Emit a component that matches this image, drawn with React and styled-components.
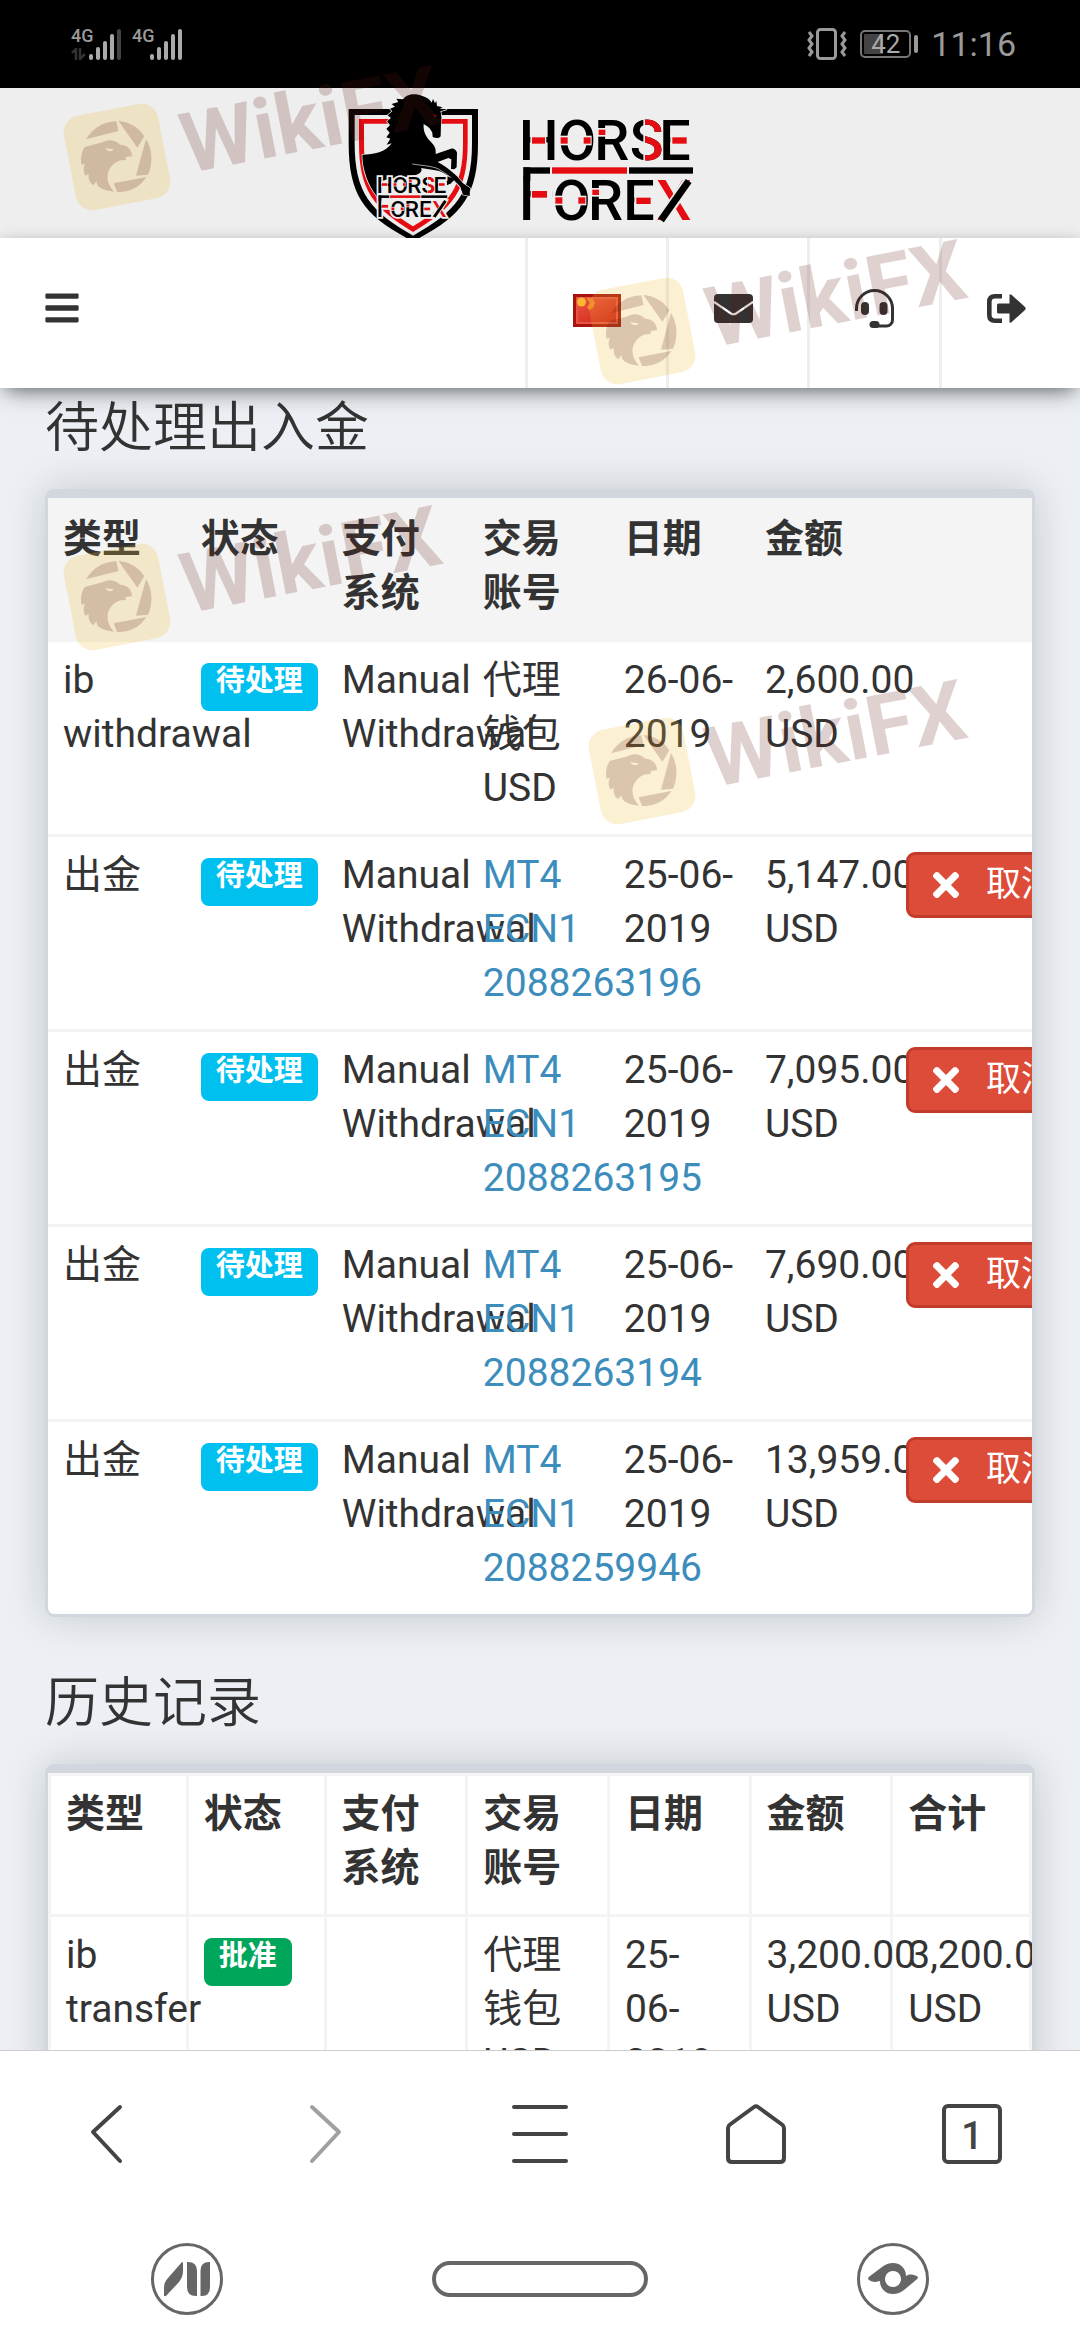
import React from "react";
import styled, { createGlobalStyle } from "styled-components";
import { FaBars, FaTimes } from "react-icons/fa";

const GlobalStyle = createGlobalStyle`
  *, *::before, *::after { box-sizing: border-box; }
  html, body { margin: 0; padding: 0; }
  body {
    background: #ecf0f5;
    color: #333;
    font-family: Roboto, "Noto Sans CJK SC", sans-serif;
    font-size: 39px;
    line-height: 54px;
  }
  button { font-family: inherit; }
`;

const Screen = styled.div`
  position: relative;
  display: flex;
  flex-direction: column;
  height: 100vh;
  overflow: hidden;
`;

/* ---------- phone status bar ---------- */

const StatusBar = styled.header`
  display: flex;
  flex: none;
  align-items: center;
  justify-content: space-between;
  height: 88px;
  padding: 0 64px 0 71px;
  background: #000;
  color: #9a9a9a;
`;

const StatusGroup = styled.div`
  display: flex;
  align-items: center;
  gap: ${(p) => p.$gap}px;
`;

const Signal = styled.div`
  display: flex;
  align-items: flex-end;
  height: 32px;
`;

const SignalSide = styled.div`
  display: flex;
  flex-direction: column;
  align-self: stretch;
  justify-content: space-between;
  width: 18px;
  font-size: 18px;
  font-weight: 500;
  line-height: 16px;
`;

const Battery = styled.div`
  display: flex;
  align-items: center;
  gap: 3px;
`;

const BatteryCase = styled.div`
  width: 51px;
  height: 28px;
  border: 2px solid #777;
  border-radius: 5px;
  background: linear-gradient(90deg, #444 45%, #000 45%) content-box;
  padding: 2px;
  color: #aaa;
  font-size: 26px;
  line-height: 20px;
  text-align: center;
`;

const BatteryNub = styled.div`
  width: 4px;
  height: 18px;
  border-radius: 2px;
  background: #9a9a9a;
`;

const Clock = styled.time`
  font-size: 34px;
  line-height: 40px;
`;

/* ---------- site header ---------- */

const Brand = styled.div`
  display: flex;
  flex: none;
  justify-content: center;
  height: 150px;
  padding-right: 36px;
  background: #eee;
`;

const NavBar = styled.nav`
  position: relative;
  z-index: 1;
  display: flex;
  flex: none;
  height: 150px;
  background: #fff;
  box-shadow: 0 10px 20px -6px rgba(0, 0, 0, 0.5), 0 0 12px rgba(0, 0, 0, 0.12);
`;

const MenuButton = styled.button`
  display: flex;
  align-items: center;
  margin-right: auto;
  padding: 0 43px 10px;
  border: 0;
  background: none;
  color: #333;
`;

const NavLink = styled.a`
  display: flex;
  align-items: center;
  padding: 0 ${(p) => (p.$wide ? 54 : 45)}px 10px 45px;
  border-left: 3px solid #eee;
  color: #333;
`;

/* ---------- content ---------- */

const Content = styled.main`
  flex: 1;
  min-height: 0;
  overflow: hidden auto;
  scrollbar-width: none;
  padding: 11px 45px 57px;
`;

const Section = styled.section`
  & + & { margin-top: 57px; }
`;

const Title = styled.h1`
  margin: 0 0 30px;
  font-size: 54px;
  font-weight: 350;
  line-height: 60px;
`;

const Card = styled.div`
  overflow: hidden;
  border: 3px solid #d2d6de;
  border-top-width: 9px;
  border-radius: 9px;
  background: #fff;
  box-shadow: 0 0 40px rgba(0, 0, 0, 0.17);
`;

const Table = styled.table`
  width: 100%;
  table-layout: fixed;
  border-spacing: 0;
  color: #333;

  th, td {
    padding: 11px 15px 19px;
    border: 0 solid #f4f4f4;
    border-top-width: 3px;
    border-left-width: ${(p) => (p.$bordered ? 3 : 0)}px;
    text-align: left;
    vertical-align: top;
    white-space: nowrap;
  }
  th:last-child, td:last-child {
    border-right-width: ${(p) => (p.$bordered ? 3 : 0)}px;
  }
  thead { background: ${(p) => (p.$bordered ? "#fff" : "#f4f4f4")}; }
`;

const NarrowCol = styled.col`
  width: 14%;
`;

const Badge = styled.span`
  display: block;
  width: fit-content;
  margin-top: 10px;
  padding: 4px 15px 15px;
  border-radius: 8px;
  background: ${(p) => (p.$tone === "approved" ? "#00a65a" : "#00c0ef")};
  color: #fff;
  font-size: 29px;
  font-weight: 700;
  line-height: 29px;
`;

const AccountLink = styled.a`
  color: #3c8dbc;
  text-decoration: none;
`;

const CancelButton = styled.button`
  position: relative;
  display: flex;
  align-items: center;
  gap: 21px;
  width: max-content;
  height: 66px;
  margin-top: 4px;
  padding: 0 18px;
  border: 3px solid #c23c2c;
  border-radius: 9px;
  background: #dd4b39;
  color: #fff;
  font-size: 35px;
  line-height: 54px;
`;

/* ---------- bottom bars ---------- */

const BrowserBar = styled.nav`
  display: grid;
  flex: none;
  grid-template-columns: repeat(5, 1fr);
  height: 167px;
  border-top: 1px solid #ccc;
  background: #fff;
`;

const BarButton = styled.button`
  display: grid;
  place-items: center;
  padding: 0;
  border: 0;
  background: none;
  color: ${(p) => (p.disabled ? "#a0a0a0" : "#444")};
`;

const TabCount = styled.span`
  display: grid;
  place-items: center;
  width: 60px;
  height: 60px;
  padding-top: 3px;
  border: 4px solid #444;
  border-radius: 6px;
  font-size: 38px;
  font-weight: 500;
  line-height: 48px;
`;

const SystemBar = styled.nav`
  display: flex;
  flex: none;
  align-items: center;
  justify-content: space-between;
  height: 123px;
  padding: 0 14%;
  background: #fff;
`;

const RoundButton = styled.button`
  display: grid;
  place-items: center;
  width: 72px;
  height: 72px;
  padding: 0;
  border: 3px solid #666;
  border-radius: 50%;
  background: none;
  color: #666;
`;

const HomePill = styled.button`
  width: 216px;
  height: 36px;
  padding: 0;
  border: 4px solid #666;
  border-radius: 18px;
  background: none;
`;

/* ---------- watermark overlay ---------- */

const Stamp = styled.div`
  position: absolute;
  z-index: 5;
  left: ${(p) => p.$x}px;
  top: ${(p) => p.$y}px;
  width: 108px;
  height: 108px;
  pointer-events: none;
`;

const StampName = styled.span`
  position: absolute;
  left: 119px;
  top: 5px;
  color: rgba(90, 25, 20, 0.2);
  font-size: 84px;
  font-weight: 700;
  line-height: 76px;
  transform: rotate(-11deg);
  transform-origin: 0 50%;
`;

const stamps = [
  [63, 103],
  [588, 277],
  [63, 543],
  [588, 717],
];

function Watermark({ x, y }) {
  return (
    <Stamp $x={x} $y={y} aria-hidden="true">
      <svg width="108" height="108" viewBox="0 0 108 108">
        <rect x="6" y="6" width="96" height="96" rx="17" transform="rotate(-11 54 54)" fill="rgba(241,187,55,0.22)" />
        <g transform="translate(-63 -73.3) scale(.3443 .3333)" fill="rgba(90,25,20,0.2)">
          <path d="M250 329 C268 298 298 276 338 275 L344 304 Z" />
          <path d="M344 274 C374 276 402 292 419 320 L399 354 Z" />
          <path d="M424 328 C444 362 444 402 430 435 L395 438 Z" />
          <path d="M425 442 C408 472 374 489 340 487 L330 461 Z" />
          <path d="M384 380 C382 356 366 345 349 345 C334 330 312 328 298 338 L246 352 C236 368 233 388 237 405 L247 402 C240 416 243 430 249 438 L258 432 C255 448 262 462 272 466 L280 454 C280 472 296 482 331 486 C310 462 306 434 322 412 C332 398 350 388 366 392 L364 384 C372 380 378 380 384 380 Z M305 356 L330 359 C325 367 314 368 305 356 Z" fillRule="evenodd" />
        </g>
      </svg>
      <StampName>WikiFX</StampName>
    </Stamp>
  );
}

/* ---------- drawings ---------- */

const RED = "#e60d12";
const PAPER = "#eee";

function Wordmark({ halo }) {
  const outline = halo ? { stroke: PAPER, strokeWidth: 26, paintOrder: "stroke" } : {};
  return (
    <g fontFamily="Roboto, sans-serif" fontWeight="500" fontSize="167" fill="#000">
      <text x="534 650 760 866 955" y="241" {...outline}>HORSE</text>
      <text x="528" y="420" fontSize="223" fontWeight="400" {...outline}>F</text>
      <text x="634 741 847" y="421" {...outline}>ORE</text>
      <text x="946" y="421" fill={RED} {...outline}>X</text>

      <text x="866" y="241" fill={RED} clipPath="url(#rightOfS)">S</text>
      <rect x="907" y="118" width="5" height="126" fill={PAPER} />

      <rect x="568" y="160" width="48" height="45" fill={PAPER} />
      <rect x="573" y="172" width="39" height="19" fill={RED} />

      {[[656, 172], [640, 352]].map(([x, y]) => (
        <g key={x}>
          <rect x={x} y={y - 5} width="96" height="29" fill={PAPER} />
          <rect x={x + 3} y={y} width="21" height="19" fill={RED} />
          <rect x={x + 72} y={y} width="21" height="19" fill={RED} />
        </g>
      ))}

      {[[768, 149], [749, 329]].map(([x, y]) => (
        <g key={x}>
          <rect x={x} y={y - 5} width="28" height="26" fill={PAPER} />
          <rect x={x + 5} y={y} width="20" height="16" fill={RED} />
        </g>
      ))}

      {[[988, 172], [880, 353]].map(([x, y]) => (
        <g key={x}>
          <rect x={x} y={y - 10} width="62" height="40" fill={PAPER} />
          <rect x={x + 6} y={y} width="43" height="19" fill={RED} />
        </g>
      ))}

      <rect x="569" y="284" width="66" height="80" fill={PAPER} />
      <rect x="573" y="333" width="45" height="20" fill={RED} />
      <rect x="548" y="256" width="508" height="30" fill={PAPER} />
      <rect x="548" y="262" width="20" height="40" />
      <rect x="548" y="262" width="79" height="19" />
      <rect x="633" y="262" width="225" height="19" fill={RED} />
      <rect x="864" y="262" width="192" height="19" />

      <line x1="963" y1="420" x2="1042" y2="304" stroke={PAPER} strokeWidth="32" />
      <line x1="960" y1="421" x2="1043" y2="303" stroke="#000" strokeWidth="21" />
    </g>
  );
}

function BrandLogo() {
  return (
    <svg width="350" height="150" viewBox="18 24 1050 450" role="img" aria-label="Horse Forex">
      <defs>
        <clipPath id="rightOfS">
          <rect x="910" y="100" width="60" height="160" />
        </clipPath>
      </defs>
      <path d="M23 87 H411 V190 C411 350 360 410 216 484 C72 410 23 350 23 190 Z" fill="#000" />
      <path d="M41 105 H393 V190 C393 340 345 394 216 467 C88 394 41 340 41 190 Z" fill={PAPER} />
      <path d="M54 117 H380 V190 C380 332 335 385 216 456 C98 385 54 332 54 190 Z" fill={RED} />
      <path d="M69 131 H366 V190 C366 322 324 373 216 439 C109 373 69 322 69 190 Z" fill={PAPER} />
      <path
        d="M64 224 C100 224 134 216 152 190 L137 194 L148 176 L136 172 L146 158 L136 146 L147 136 L138 124 L150 114 L140 106 L154 94 L147 86 L162 80 L152 72 L172 66 L166 56 L186 58 C196 42 222 38 244 48 C258 52 268 60 272 68 L276 57 L282 70 L286 62 L288 78 L305 82 L296 86 L318 88 L298 94 C302 104 302 118 300 130 L299 168 C296 176 284 175 275 171 L274 158 C268 146 262 140 248 132 C246 152 254 170 268 184 C280 196 286 206 284 222 L330 206 C338 204 346 210 348 218 L347 262 L340 268 L330 267 L331 238 L322 234 L290 246 C318 262 348 284 366 310 L387 324 L386 348 L366 344 L358 322 C336 296 318 282 292 272 L240 264 C246 272 236 282 222 286 C180 296 130 292 112 312 L108 350 C82 316 64 270 64 224 Z"
        fill="#000"
        stroke={PAPER}
        strokeWidth="4"
        paintOrder="stroke"
      />
      <path d="M214 252 C250 258 284 258 300 272 C322 284 344 304 358 322" fill="none" stroke={PAPER} strokeWidth="2" />
      <path d="M316 288 L342 298 L330 310 L318 316 Z" fill="#000" />
      <path d="M276 103 l9 5 -2 4 z" fill={RED} />
      <g transform="translate(-109 240) scale(.405)">
        <Wordmark halo />
      </g>
      <Wordmark />
    </svg>
  );
}

function SignalBars({ weak }) {
  return (
    <svg width="33" height="32" viewBox="0 0 33 32" fill="#aaa" aria-hidden="true">
      <rect x="0" y="26" width="4" height="6" rx="2" />
      <rect x="7" y="19" width="4" height="13" rx="2" />
      <rect x="14" y="13" width="4" height="19" rx="2" />
      <rect x="21" y="6" width="4" height="26" rx="2" />
      <rect x="28" y="1" width="4" height="31" rx="2" fill={weak ? "#444" : "#aaa"} />
    </svg>
  );
}

const DataArrows = () => (
  <svg width="15" height="12" viewBox="0 0 15 12" fill="none" stroke="#333" strokeWidth="2.5" aria-hidden="true">
    <path d="M1 5 L5 1 V12 M9 0 V11 L14 6" />
  </svg>
);

const VibrateIcon = () => (
  <svg width="40" height="32" viewBox="0 0 40 32" fill="none" stroke="#9a9a9a" strokeWidth="3" aria-label="振动">
    <rect x="10.5" y="1.5" width="18" height="29" rx="3" />
    <path d="M2 4 L5 8 L2 12 L5 16 L2 20 L5 24 L2 28 M38 4 L35 8 L38 12 L35 16 L38 20 L35 24 L38 28" strokeWidth="3" />
  </svg>
);

const ChinaFlag = () => (
  <svg width="48" height="37" viewBox="0 -4 48 37" role="img" aria-label="中文">
    <defs>
      <linearGradient id="flagRed" x1="0" y1="0" x2="1" y2="1">
        <stop offset="0" stopColor="#ea5540" />
        <stop offset="1" stopColor="#cf1f17" />
      </linearGradient>
    </defs>
    <rect width="48" height="33" fill="#a8120f" />
    <rect x="3" y="3" width="42" height="27" fill="#e65445" />
    <rect x="5" y="5" width="38" height="23" fill="url(#flagRed)" />
    <circle cx="8.5" cy="8" r="4.5" fill="#fbb52f" />
    <path d="M15 3 l5 2 2 4 -2 5 -4 2 -2 -3 3 -4 -3 -4z" fill="#f0852b" />
  </svg>
);

const MailIcon = () => (
  <svg width="39" height="29" viewBox="0 0 39 29" aria-label="邮件">
    <rect width="39" height="29" rx="4" fill="#333" />
    <path d="M0 8 L17 19.5 Q19.5 21 22 19.5 L39 8" fill="none" stroke="#fff" strokeWidth="2.2" />
  </svg>
);

const HeadsetIcon = () => (
  <svg width="39" height="39" viewBox="0 0 39 39" fill="#333" aria-label="客服">
    <path d="M1.5 22 V19.5 A18 18 0 0 1 37.5 19.5 V31 a6 6 0 0 1 -6 6 H20" fill="none" stroke="#333" strokeWidth="3" />
    <rect x="14.5" y="32" width="10" height="7" rx="3.5" />
    <rect x="6" y="13" width="8" height="13" rx="4" />
    <rect x="24.5" y="13" width="8" height="13" rx="4" />
  </svg>
);

const SignOutIcon = () => (
  <svg width="39" height="29" viewBox="0 0 39 29" fill="#333" aria-label="退出">
    <path d="M15 2.3 H8 Q2.3 2.3 2.3 8 V21 Q2.3 26.7 8 26.7 H15" fill="none" stroke="#333" strokeWidth="4.6" />
    <path d="M11.5 9.5 H22.5 V1.5 Q22.5 -.8 24.5 .8 L38 13 Q39.3 14.5 38 16 L24.5 28.2 Q22.5 29.8 22.5 27.5 V19.5 H11.5 Q10 19.5 10 18 V11 Q10 9.5 11.5 9.5 Z" />
  </svg>
);

function LineIcon({ d, width = 60 }) {
  return (
    <svg width={width} height="60" viewBox={`0 0 ${width} 60`} fill="none" stroke="currentColor" strokeWidth="4" strokeLinecap="round" strokeLinejoin="round" aria-hidden="true">
      <path d={d} />
    </svg>
  );
}

/* ---------- data ---------- */

const pendingHeads = [["类型"], ["状态"], ["支付", "系统"], ["交易", "账号"], ["日期"], ["金额"], []];
const historyHeads = [["类型"], ["状态"], ["支付", "系统"], ["交易", "账号"], ["日期"], ["金额"], ["合计"]];

const pending = [
  { type: ["ib", "withdrawal"], account: ["代理", "钱包", "USD"], date: ["26-06-", "2019"], amount: "2,600.00" },
  { type: ["出金"], account: ["MT4", "ECN1", "2088263196"], date: ["25-06-", "2019"], amount: "5,147.00", open: true },
  { type: ["出金"], account: ["MT4", "ECN1", "2088263195"], date: ["25-06-", "2019"], amount: "7,095.00", open: true },
  { type: ["出金"], account: ["MT4", "ECN1", "2088263194"], date: ["25-06-", "2019"], amount: "7,690.00", open: true },
  { type: ["出金"], account: ["MT4", "ECN1", "2088259946"], date: ["25-06-", "2019"], amount: "13,959.00", open: true },
];

function Lines({ of }) {
  return of.map((line, i) => (
    <React.Fragment key={i}>
      {i > 0 && <br />}
      {line}
    </React.Fragment>
  ));
}

function HeadRow({ heads }) {
  return (
    <thead>
      <tr>
        {heads.map((h, i) =>
          h.length ? (
            <th key={i} scope="col">
              <Lines of={h} />
            </th>
          ) : (
            <td key={i} />
          )
        )}
      </tr>
    </thead>
  );
}

function PendingRow({ row }) {
  return (
    <tr>
      <td><Lines of={row.type} /></td>
      <td><Badge>待处理</Badge></td>
      <td><Lines of={["Manual", "Withdrawal"]} /></td>
      <td>
        {row.open ? (
          <AccountLink href="#account"><Lines of={row.account} /></AccountLink>
        ) : (
          <Lines of={row.account} />
        )}
      </td>
      <td><Lines of={row.date} /></td>
      <td><Lines of={[row.amount, "USD"]} /></td>
      <td>
        {row.open && (
          <CancelButton type="button">
            <FaTimes size={38} aria-hidden="true" />
            取消
          </CancelButton>
        )}
      </td>
    </tr>
  );
}

export default function App() {
  return (
    <Screen>
      <GlobalStyle />
      <StatusBar>
        <StatusGroup $gap={10}>
          <Signal>
            <SignalSide>4G<DataArrows /></SignalSide>
            <SignalBars weak />
          </Signal>
          <Signal>
            <SignalSide>4G</SignalSide>
            <SignalBars />
          </Signal>
        </StatusGroup>
        <StatusGroup $gap={13}>
          <VibrateIcon />
          <Battery>
            <BatteryCase>42</BatteryCase>
            <BatteryNub />
          </Battery>
          <Clock>11:16</Clock>
        </StatusGroup>
      </StatusBar>

      <Brand><BrandLogo /></Brand>

      <NavBar>
        <MenuButton type="button" aria-label="菜单"><FaBars size={38} /></MenuButton>
        <NavLink href="#language"><ChinaFlag /></NavLink>
        <NavLink href="#mail" $wide><MailIcon /></NavLink>
        <NavLink href="#support"><HeadsetIcon /></NavLink>
        <NavLink href="#logout" $wide><SignOutIcon /></NavLink>
      </NavBar>

      <Content>
        <Section>
          <Title>待处理出入金</Title>
          <Card>
            <Table>
              <colgroup><NarrowCol /></colgroup>
              <HeadRow heads={pendingHeads} />
              <tbody>
                {pending.map((row, i) => <PendingRow key={i} row={row} />)}
              </tbody>
            </Table>
          </Card>
        </Section>

        <Section>
          <Title as="h2">历史记录</Title>
          <Card>
            <Table $bordered>
              <colgroup><NarrowCol /><NarrowCol /></colgroup>
              <HeadRow heads={historyHeads} />
              <tbody>
                <tr>
                  <td><Lines of={["ib", "transfer"]} /></td>
                  <td><Badge $tone="approved">批准</Badge></td>
                  <td />
                  <td><Lines of={["代理", "钱包", "USD"]} /></td>
                  <td><Lines of={["25-", "06-", "2019"]} /></td>
                  <td><Lines of={["3,200.00", "USD"]} /></td>
                  <td><Lines of={["3,200.00", "USD"]} /></td>
                </tr>
              </tbody>
            </Table>
          </Card>
        </Section>
      </Content>

      <BrowserBar>
        <BarButton type="button" aria-label="后退"><LineIcon d="M42 3 L15 28 L42 57" /></BarButton>
        <BarButton type="button" aria-label="前进" disabled><LineIcon d="M18 3 L45 28 L18 57" /></BarButton>
        <BarButton type="button" aria-label="菜单"><LineIcon d="M2 3 H54 M2 30 H54 M2 57 H54" width={56} /></BarButton>
        <BarButton type="button" aria-label="主页"><LineIcon d="M2 24 Q2 22 4 20.5 L28 3 Q30 1.5 32 3 L56 20.5 Q58 22 58 24 V54 Q58 58 54 58 H6 Q2 58 2 54 Z" /></BarButton>
        <BarButton type="button" aria-label="标签页"><TabCount>1</TabCount></BarButton>
      </BrowserBar>

      <SystemBar>
        <RoundButton type="button" aria-label="最近">
          <svg width="46" height="34" viewBox="0 0 46 34" fill="currentColor" aria-hidden="true">
            <path d="M18 0 Q19 -.5 19 1 V9 Q19 15 15 20 L2 34 Q0 35 0 33 V26 Q0 20 4 16 Z" />
            <path d="M23 0 H24 Q33 0 33 9 V34 H32 Q23 34 23 25 Z" />
            <path d="M46 0 H45 Q36.5 0 36.5 9 V34 H38 Q46 34 46 25 Z" />
          </svg>
        </RoundButton>
        <HomePill type="button" aria-label="主屏幕" />
        <RoundButton type="button" aria-label="助手">
          <svg width="50" height="32" viewBox="0 0 50 32" fill="currentColor" aria-hidden="true">
            <path d="M2 13 L14 4 Q19 0 25 0 C33 0 38 6 38 13 C43 10 47 12 50 14 Q50 16 48 17 L36 27 Q31 31 25 31 C17 31 12 25 12 18 C9 19 4 20 0 16 Q0 14 2 13 Z M25 8 a8 8 0 1 0 .01 0 Z" fillRule="evenodd" />
          </svg>
        </RoundButton>
      </SystemBar>

      {stamps.map(([x, y]) => <Watermark key={`${x}-${y}`} x={x} y={y} />)}
    </Screen>
  );
}
